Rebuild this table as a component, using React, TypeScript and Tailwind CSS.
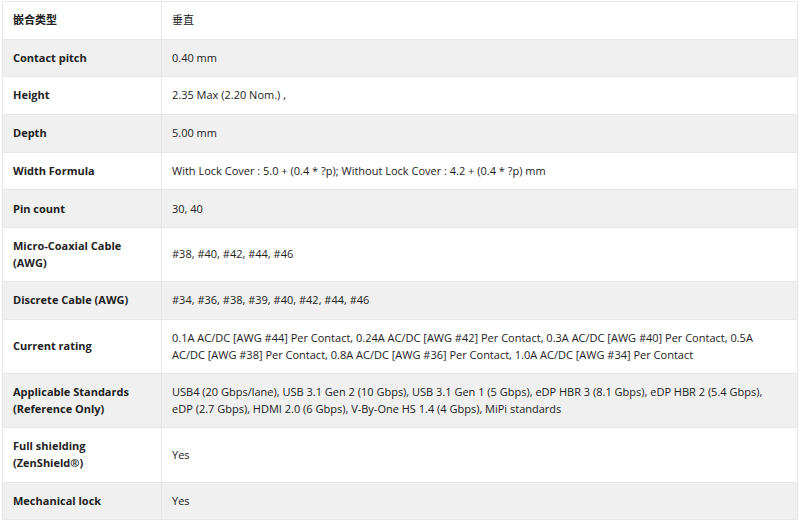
import React from "react";

const rows: [string, string][] = [
  ["嵌合类型", "垂直"],
  ["Contact pitch", "0.40 mm"],
  ["Height", "2.35 Max (2.20 Nom.) ,"],
  ["Depth", "5.00 mm"],
  ["Width Formula", "With Lock Cover : 5.0 + (0.4 * ?p); Without Lock Cover : 4.2 + (0.4 * ?p) mm"],
  ["Pin count", "30, 40"],
  ["Micro-Coaxial Cable (AWG)", "#38, #40, #42, #44, #46"],
  ["Discrete Cable (AWG)", "#34, #36, #38, #39, #40, #42, #44, #46"],
  [
    "Current rating",
    "0.1A AC/DC [AWG #44] Per Contact, 0.24A AC/DC [AWG #42] Per Contact, 0.3A AC/DC [AWG #40] Per Contact, 0.5A AC/DC [AWG #38] Per Contact, 0.8A AC/DC [AWG #36] Per Contact, 1.0A AC/DC [AWG #34] Per Contact",
  ],
  [
    "Applicable Standards (Reference Only)",
    "USB4 (20 Gbps/lane), USB 3.1 Gen 2 (10 Gbps), USB 3.1 Gen 1 (5 Gbps), eDP HBR 3 (8.1 Gbps), eDP HBR 2 (5.4 Gbps), eDP (2.7 Gbps), HDMI 2.0 (6 Gbps), V-By-One HS 1.4 (4 Gbps), MiPi standards",
  ],
  ["Full shielding (ZenShield®)", "Yes"],
  ["Mechanical lock", "Yes"],
];

export default function App() {
  return (
    <div
      className="w-[800px] h-[525px] bg-white pl-[2px] pt-[1px] text-[#222]"
      style={{ fontFamily: '"Open Sans", "Noto Sans CJK SC", sans-serif' }}
    >
      <table className="w-[796px] border-collapse text-[11px] leading-[16.5px]">
        <tbody>
          {rows.map(([k, v], i) => (
            <tr key={i} className={i % 2 === 1 ? "bg-[#f0f0f0]" : "bg-white"}>
              <td className="w-[159px] border border-[#e6e6e6] px-[10px] py-[10.1px] align-middle font-bold">
                {k}
              </td>
              <td className="border border-[#e6e6e6] pl-[10px] pr-[14px] py-[10.1px] align-middle">{v}</td>
            </tr>
          ))}
        </tbody>
      </table>
    </div>
  );
}
